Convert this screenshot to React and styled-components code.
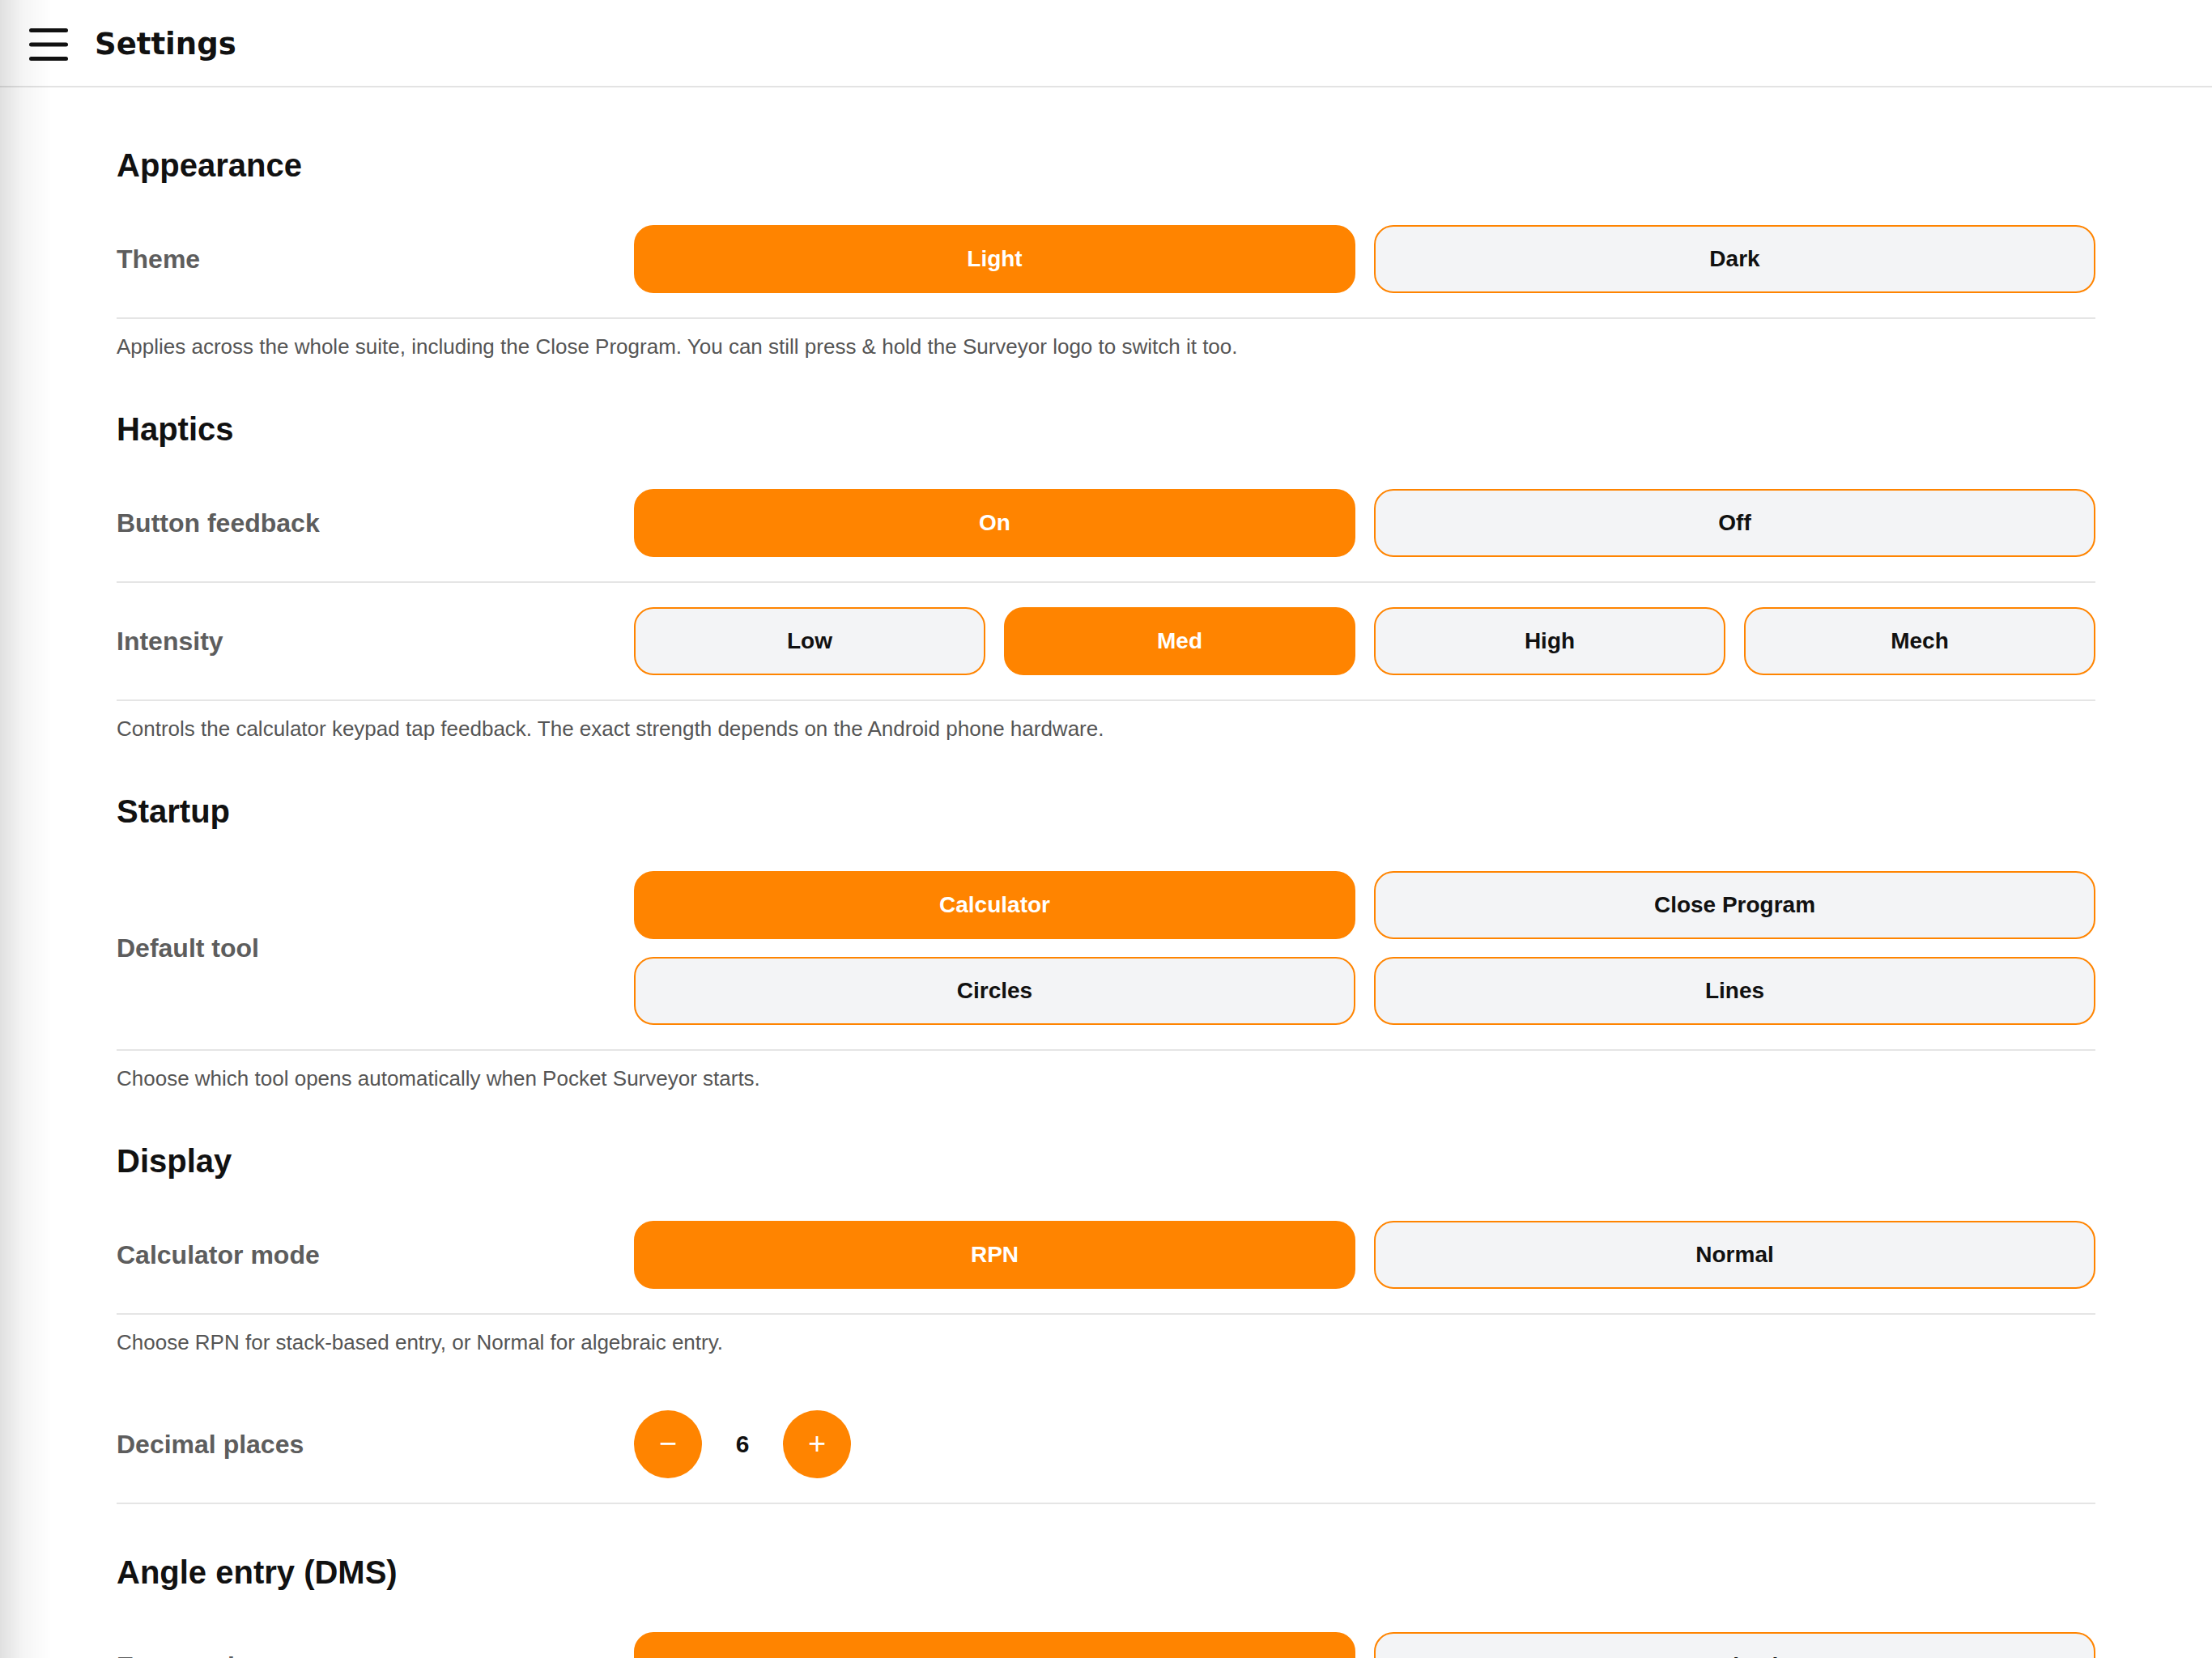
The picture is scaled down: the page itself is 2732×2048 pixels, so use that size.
import styled, { createGlobalStyle } from 'styled-components'

const ORANGE = '#ff8400'

const GlobalStyle = createGlobalStyle`
  html, body {
    margin: 0;
    padding: 0;
    background: #fff;
    overflow: hidden;
  }
  body {
    font-family: 'Liberation Sans', Arial, sans-serif;
    color: #111;
  }
  * {
    box-sizing: border-box;
  }
`

const Shade = styled.div`
  position: fixed;
  top: 0;
  left: 0;
  bottom: 0;
  width: 64px;
  pointer-events: none;
  background: linear-gradient(to right, rgba(0, 0, 0, 0.12), rgba(0, 0, 0, 0.04) 45%, rgba(0, 0, 0, 0));
  z-index: 10;
`

const Header = styled.header`
  height: 108px;
  display: flex;
  align-items: center;
  gap: 33px;
  padding: 3px 36px 0;
  border-bottom: 2px solid #e3e3e3;
`

const MenuButton = styled.button`
  width: 48px;
  height: 40px;
  padding: 0;
  border: 0;
  background: none;
  display: flex;
  color: #111;
`

const Title = styled.h1`
  margin: 0;
  font-family: 'DejaVu Sans', sans-serif;
  font-size: 37px;
  font-weight: 700;
  color: #111;
`

const Content = styled.main`
  padding: 48px 144px 60px;
`

const SectionTitle = styled.h2`
  margin: 0 0 20px;
  padding-top: 24px;
  font-size: 40px;
  line-height: 48px;
  font-weight: 700;
  color: #111;
`

const Group = styled.div`
  margin-bottom: 36px;
`

const Row = styled.div`
  display: grid;
  grid-template-columns: 615px 1fr;
  gap: 24px;
  align-items: center;
  padding: 30px 0;
  border-bottom: 2px solid #e5e5e5;
`

const Label = styled.div`
  font-size: 32px;
  font-weight: 700;
  color: #5d5d5d;
`

const Options = styled.div`
  display: grid;
  grid-template-columns: repeat(${p => p.$cols}, 1fr);
  gap: 22px 23px;
`

const Option = styled.button`
  height: 84px;
  border-radius: 24px;
  border: 2px solid ${ORANGE};
  background: ${p => (p.$active ? ORANGE : '#f3f4f6')};
  color: ${p => (p.$active ? '#fff' : '#111')};
  font-family: 'Liberation Sans', Arial, sans-serif;
  font-size: 28px;
  font-weight: 700;
  cursor: pointer;
`

const Help = styled.p`
  margin: 16px 0 0;
  font-size: 26px;
  line-height: 36px;
  color: #555;
`

const Stepper = styled.div`
  display: flex;
  align-items: center;
  gap: 24px;
`

const RoundButton = styled.button`
  width: 84px;
  height: 84px;
  border-radius: 50%;
  border: 0;
  background: ${ORANGE};
  color: #fff;
  font-family: 'Liberation Sans', Arial, sans-serif;
  font-size: 38px;
  line-height: 1;
  display: flex;
  align-items: center;
  justify-content: center;
  padding: 0 0 3px;
`

const Value = styled.span`
  min-width: 52px;
  text-align: center;
  font-size: 30px;
  font-weight: 700;
  color: #111;
`

function MenuIcon() {
  return (
    <svg width='48' height='40' viewBox='0 0 48 40'>
      <g stroke='#111' strokeWidth='5' strokeLinecap='round'>
        <line x1='2.5' y1='2.5' x2='45.5' y2='2.5' />
        <line x1='2.5' y1='20' x2='45.5' y2='20' />
        <line x1='2.5' y1='37.5' x2='45.5' y2='37.5' />
      </g>
    </svg>
  )
}

function Choice({ label, options, active, cols }) {
  return (
    <Row>
      <Label>{label}</Label>
      <Options $cols={cols || options.length}>
        {options.map(o => (
          <Option key={o} $active={o === active}>
            {o}
          </Option>
        ))}
      </Options>
    </Row>
  )
}

export default function App() {
  return (
    <>
      <GlobalStyle />
      <Shade />
      <Header>
        <MenuButton>
          <MenuIcon />
        </MenuButton>
        <Title>Settings</Title>
      </Header>
      <Content>
        <SectionTitle>Appearance</SectionTitle>
        <Group>
          <Choice label='Theme' options={['Light', 'Dark']} active='Light' />
          <Help>
            Applies across the whole suite, including the Close Program. You can still press &amp; hold the
            Surveyor logo to switch it too.
          </Help>
        </Group>

        <SectionTitle>Haptics</SectionTitle>
        <Group>
          <Choice label='Button feedback' options={['On', 'Off']} active='On' />
          <Choice label='Intensity' options={['Low', 'Med', 'High', 'Mech']} active='Med' />
          <Help>
            Controls the calculator keypad tap feedback. The exact strength depends on the Android phone
            hardware.
          </Help>
        </Group>

        <SectionTitle>Startup</SectionTitle>
        <Group>
          <Choice
            label='Default tool'
            options={['Calculator', 'Close Program', 'Circles', 'Lines']}
            active='Calculator'
            cols={2}
          />
          <Help>Choose which tool opens automatically when Pocket Surveyor starts.</Help>
        </Group>

        <SectionTitle>Display</SectionTitle>
        <Group>
          <Choice label='Calculator mode' options={['RPN', 'Normal']} active='RPN' />
          <Help>Choose RPN for stack-based entry, or Normal for algebraic entry.</Help>
        </Group>
        <Group>
          <Row>
            <Label>Decimal places</Label>
            <Stepper>
              <RoundButton>−</RoundButton>
              <Value>6</Value>
              <RoundButton>+</RoundButton>
            </Stepper>
          </Row>
        </Group>

        <SectionTitle>Angle entry (DMS)</SectionTitle>
        <Group>
          <Choice label='Entry style' options={['DD.MMSS', 'Decimal']} active='DD.MMSS' />
          <Help>Choose how angles are typed in.</Help>
        </Group>
      </Content>
    </>
  )
}
